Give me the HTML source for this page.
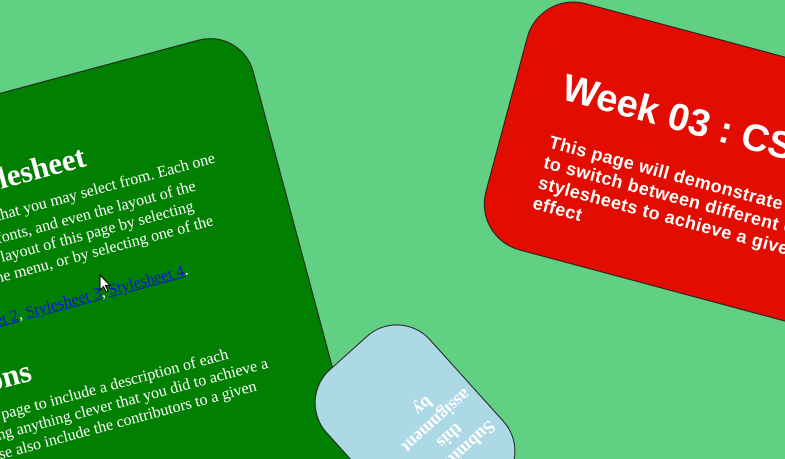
<!DOCTYPE html>
<html><head><meta charset="utf-8"><style>
html,body{margin:0;padding:0;width:785px;height:459px;overflow:hidden;background:#62d083;}
#wrap{position:relative;width:785px;height:459px;overflow:hidden;}
.b{position:absolute;box-sizing:border-box;border:1px solid #222;}
#g{left:-358px;top:28px;width:600px;height:520px;background:#007f00;border-radius:45px;transform-origin:top right;transform:rotate(-15deg);font-family:"Liberation Serif",serif;color:#fff;}
#g .l{position:absolute;white-space:nowrap;font-size:16px;line-height:20px;}
#g .h{position:absolute;white-space:nowrap;font-size:31px;font-weight:bold;line-height:36px;}
#g a{color:#1010e0;}
#r{left:473px;top:-18px;width:520px;height:256px;background:#e20c00;border-radius:48px;transform-origin:bottom left;transform:rotate(15deg);font-family:"Liberation Sans",sans-serif;color:#fff;font-weight:bold;}
#u{left:345px;top:327px;width:140px;height:200px;background:#add8e6;border-radius:45px;transform:rotate(138deg);font-family:"Liberation Serif",serif;color:#fff;font-weight:bold;font-size:18px;line-height:20px;}
</style></head><body><div id="wrap">
<div class="b" id="g">
  <div class="h" style="right:184px;top:64px">Choose a Stylesheet</div>
  <div class="l" style="right:59px;top:108px">There are several stylesheets that you may select from. Each one</div>
  <div class="l" style="right:85px;top:130px">will change the colours, the fonts, and even the layout of the</div>
  <div class="l" style="right:92px;top:149px">page. You can change the layout of this page by selecting</div>
  <div class="l" style="right:77px;top:168px">a different stylesheet from the menu, or by selecting one of the</div>
  <div class="l" style="right:114px;top:209px"><a href="#">Stylesheet 1</a>, <a href="#">Stylesheet 2</a>, <a href="#">Stylesheet 3</a>, <a href="#">Stylesheet 4</a>.</div>
  <div class="h" style="right:292px;top:257px">Contributions</div>
  <div class="l" style="right:97px;top:301px">You should use this part of the page to include a description of each</div>
  <div class="l" style="right:61px;top:320px">stylesheet. If you did something anything clever that you did to achieve a</div>
  <div class="l" style="right:78px;top:339px">particular effect, describe it. Please also include the contributors to a given</div>
</div>
<div class="b" id="r">
  <div style="position:absolute;left:47px;top:65px;font-size:38px;line-height:42px;white-space:nowrap">Week 03 : CSS Stylesheets</div>
  <div style="position:absolute;left:48px;top:132px;font-size:18px;line-height:21px;letter-spacing:0.4px;white-space:nowrap">This page will demonstrate how to be able<br>to switch between different CSS<br>stylesheets to achieve a given<br>effect</div>
</div>
<div class="b" id="u">
  <div style="position:absolute;left:4px;top:39px;width:90px;text-align:center">Submitted<br>this<br>assignment<br>by</div>
</div>
<svg style="position:absolute;left:99px;top:274px" width="14" height="20" viewBox="0 0 14 20"><path d="M1 1 L1 16 L4.5 12.5 L7 18 L9 17 L6.5 11.5 L11 11.5 Z" fill="#fff" stroke="#000" stroke-width="1"/></svg>
</div></body></html>
